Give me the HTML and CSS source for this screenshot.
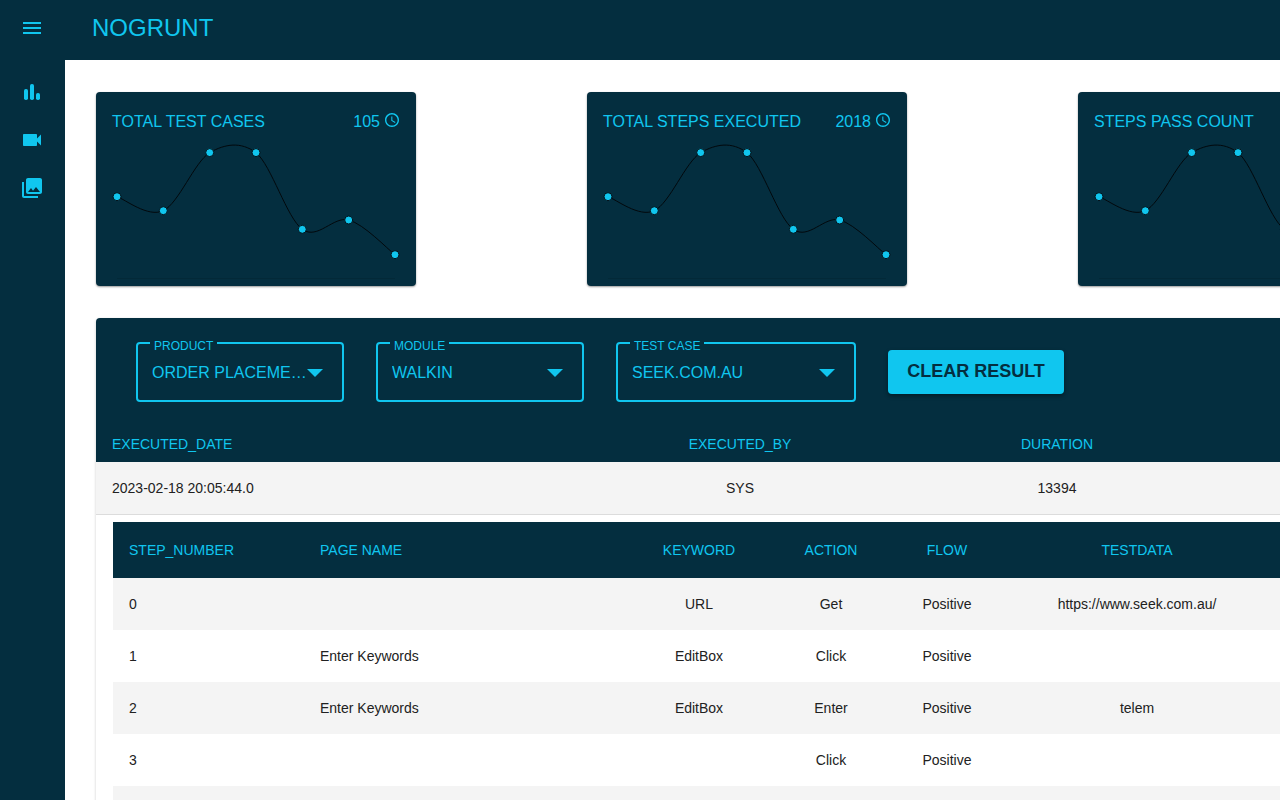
FILE: index.html
```html
<!DOCTYPE html>
<html lang="en">
<head>
<meta charset="utf-8">
<title>NOGRUNT</title>
<link rel="stylesheet" href="styles.css">
</head>
<body>
<svg class="defs" aria-hidden="true">
  <symbol id="trend" viewBox="0 0 288 150">
    <path d="M5 142.500H283" fill="none" stroke="#000" stroke-opacity=".1"/>
    <path d="M5 60.700C12.700 63 35.900 82 51.300 74.700C66.700 67.300 82.300 26.300 97.700 16.600C113.100 7.900 128.600 5.300 144 16.600C159.400 29.400 174.900 82.100 190.300 93.300C205.700 104.500 221.300 79.800 236.700 84C252.100 88.200 275.300 112.900 283 118.700" fill="none" stroke="#02080c" stroke-width="1"/>
    <g fill="#10c6ef" stroke="#02131c" stroke-width="1">
      <circle cx="5" cy="60.700" r="4"/><circle cx="51.300" cy="74.700" r="4"/><circle cx="97.700" cy="16.600" r="4"/><circle cx="144" cy="16.600" r="4"/><circle cx="190.300" cy="93.300" r="4"/><circle cx="236.700" cy="84" r="4"/><circle cx="283" cy="118.700" r="4"/>
    </g>
  </symbol>
  <symbol id="clock" viewBox="2 2 20 20">
    <path d="M11.990 2C6.470 2 2 6.480 2 12s4.470 10 9.990 10C17.520 22 22 17.520 22 12S17.520 2 11.990 2zM12 20c-4.420 0-8-3.580-8-8s3.580-8 8-8 8 3.580 8 8-3.580 8-8 8zm.5-13H11v6l5.250 3.150.75-1.230-4.500-2.670z" fill="currentColor"/>
  </symbol>
</svg>

<header class="topbar">
  <button class="icon-button" type="button" aria-label="Menu">
    <svg class="icon" viewBox="0 0 24 24"><path d="M3 18h18v-2H3v2zm0-5h18v-2H3v2zm0-7v2h18V6H3z"/></svg>
  </button>
  <h1 class="brand">NOGRUNT</h1>
</header>

<div class="shell">
  <nav class="sidebar" aria-label="Main">
    <a class="nav-link" href="#dashboard" aria-label="Dashboard">
      <svg class="icon" viewBox="0 0 24 24"><rect x="4" y="9" width="4" height="11" rx="1.800"/><rect x="10" y="4" width="4" height="16" rx="1.800"/><rect x="16" y="13" width="4" height="7" rx="1.800"/></svg>
    </a>
    <a class="nav-link" href="#recordings" aria-label="Recordings">
      <svg class="icon" viewBox="0 0 24 24"><path d="M17 10.500V7c0-.55-.45-1-1-1H4c-.55 0-1 .45-1 1v10c0 .55.45 1 1 1h12c.55 0 1-.45 1-1v-3.500l4 4v-11l-4 4z"/></svg>
    </a>
    <a class="nav-link" href="#gallery" aria-label="Screenshots">
      <svg class="icon" viewBox="0 0 24 24"><path d="M22 16V4c0-1.100-.9-2-2-2H8c-1.100 0-2 .9-2 2v12c0 1.100.9 2 2 2h12c1.100 0 2-.9 2-2zm-11-4l2.030 2.710L16 11l4 5H8l3-4zM2 6v14c0 1.100.9 2 2 2h14v-2H4V6H2z"/></svg>
    </a>
  </nav>

  <main class="content">
    <div class="board">
      <section class="cards" aria-label="Totals">
        <article class="card">
          <div class="card-head"><h2 class="card-title">TOTAL TEST CASES</h2><span class="card-value">105<svg class="clock"><use href="#clock"/></svg></span></div>
          <svg class="chart"><use href="#trend"/></svg>
        </article>
        <article class="card">
          <div class="card-head"><h2 class="card-title">TOTAL STEPS EXECUTED</h2><span class="card-value">2018<svg class="clock"><use href="#clock"/></svg></span></div>
          <svg class="chart"><use href="#trend"/></svg>
        </article>
        <article class="card">
          <div class="card-head"><h2 class="card-title">STEPS PASS COUNT</h2></div>
          <svg class="chart"><use href="#trend"/></svg>
        </article>
      </section>

      <section class="panel" aria-label="Results">
        <form class="filters">
          <div class="field">
            <label class="field-label" for="product">PRODUCT</label>
            <select class="field-select" id="product"><option>ORDER PLACEMENT</option></select>
            <svg class="arrow" viewBox="0 0 16 8"><path d="M0 0h16L8 8z"/></svg>
          </div>
          <div class="field">
            <label class="field-label" for="module">MODULE</label>
            <select class="field-select" id="module"><option>WALKIN</option></select>
            <svg class="arrow" viewBox="0 0 16 8"><path d="M0 0h16L8 8z"/></svg>
          </div>
          <div class="field field-wide">
            <label class="field-label" for="testcase">TEST CASE</label>
            <select class="field-select" id="testcase"><option>SEEK.COM.AU</option></select>
            <svg class="arrow" viewBox="0 0 16 8"><path d="M0 0h16L8 8z"/></svg>
          </div>
          <button class="clear" type="button">CLEAR RESULT</button>
        </form>

        <table class="runs">
          <colgroup><col class="run-date"><col class="run-by"><col class="run-duration"><col></colgroup>
          <thead>
            <tr><th class="start">EXECUTED_DATE</th><th>EXECUTED_BY</th><th>DURATION</th><th></th></tr>
          </thead>
          <tbody>
            <tr class="run"><td class="start">2023-02-18 20:05:44.0</td><td>SYS</td><td>13394</td><td></td></tr>
            <tr>
              <td class="detail" colspan="4">
                <table class="steps">
                  <colgroup><col class="step-number"><col class="step-page"><col class="step-keyword"><col class="step-action"><col class="step-flow"><col class="step-data"><col></colgroup>
                  <thead>
                    <tr><th class="start">STEP_NUMBER</th><th class="start">PAGE NAME</th><th>KEYWORD</th><th>ACTION</th><th>FLOW</th><th>TESTDATA</th><th></th></tr>
                  </thead>
                  <tbody>
                    <tr><td class="start">0</td><td></td><td>URL</td><td>Get</td><td>Positive</td><td>https://www.seek.com.au/</td><td></td></tr>
                    <tr><td class="start">1</td><td class="start">Enter Keywords</td><td>EditBox</td><td>Click</td><td>Positive</td><td></td><td></td></tr>
                    <tr><td class="start">2</td><td class="start">Enter Keywords</td><td>EditBox</td><td>Enter</td><td>Positive</td><td>telem</td><td></td></tr>
                    <tr><td class="start">3</td><td></td><td></td><td>Click</td><td>Positive</td><td></td><td></td></tr>
                    <tr><td></td><td></td><td></td><td></td><td></td><td></td><td></td></tr>
                  </tbody>
                </table>
              </td>
            </tr>
          </tbody>
        </table>
      </section>
    </div>
  </main>
</div>
</body>
</html>
```
FILE: styles.css
```css
:root {
  --navy: #042e3f;
  --cyan: #10c6ef;
  --stripe: #f4f4f4;
}

* { box-sizing: border-box; }

body {
  margin: 0;
  height: 100vh;
  display: flex;
  flex-direction: column;
  overflow: hidden;
  background: #fff;
  color: #212121;
  font-family: "Liberation Sans", Arial, sans-serif;
  font-size: 14px;
}

.defs {
  position: absolute;
  width: 0;
  height: 0;
}

.topbar {
  flex: none;
  display: flex;
  align-items: center;
  gap: 36px;
  padding: 4px 8px 8px;
  background: var(--navy);
  color: var(--cyan);
}

.icon-button {
  display: flex;
  padding: 12px;
  border: 0;
  background: none;
  color: inherit;
}

.icon {
  width: 24px;
  height: 24px;
  fill: currentColor;
}

.brand {
  margin: 0;
  font-size: 24px;
  font-weight: 400;
  line-height: 32px;
}

.shell {
  flex: 1;
  min-height: 0;
  display: flex;
}

.sidebar {
  flex: none;
  width: 65px;
  padding: 8px;
  background: var(--navy);
  color: var(--cyan);
}

.nav-link {
  display: flex;
  padding: 12px;
  color: inherit;
}

.content {
  flex: 1;
  min-width: 0;
  padding: 32px 0 0 31px;
  overflow: hidden;
}

.board { min-width: 1792px; }

.cards {
  display: flex;
  gap: 171px;
  margin-bottom: 32px;
}

.card {
  flex: none;
  width: 320px;
  padding: 16px 16px 0;
  border-radius: 4px;
  background: var(--navy);
  color: var(--cyan);
  box-shadow: 0 1px 2px rgba(0, 0, 0, .4);
}

.card-head {
  display: flex;
  justify-content: space-between;
  font-size: 16px;
  line-height: 28px;
}

.card-title {
  margin: 0;
  font-size: 16px;
  font-weight: 400;
}

.card-value {
  display: flex;
  gap: 5px;
}

.clock {
  width: 14px;
  height: 14px;
  margin: 5px 1px 0 0;
}

.chart {
  display: block;
  width: 100%;
  height: 150px;
}

.panel {
  border-radius: 4px;
  background: #fff;
  box-shadow: 0 1px 3px rgba(0, 0, 0, .2);
  overflow: hidden;
}

.filters {
  display: flex;
  align-items: center;
  gap: 32px;
  padding: 24px 40px;
  background: var(--navy);
}

.field {
  position: relative;
  width: 208px;
}

.field-wide { width: 240px; }

.field-label {
  position: absolute;
  top: -3px;
  left: 14px;
  padding: 0 4px;
  background: var(--navy);
  color: var(--cyan);
  font-size: 12px;
  line-height: 14px;
}

.field-select {
  display: block;
  width: 100%;
  height: 60px;
  padding: 0 34px 0 14px;
  appearance: none;
  border: 2px solid var(--cyan);
  border-radius: 4px;
  background: transparent;
  color: var(--cyan);
  font: 16px "Liberation Sans", Arial, sans-serif;
  text-overflow: ellipsis;
  white-space: nowrap;
  overflow: hidden;
}

.arrow {
  position: absolute;
  top: 27px;
  right: 21px;
  width: 16px;
  height: 8px;
  fill: var(--cyan);
  pointer-events: none;
}

.clear {
  padding: 10px 16px 12px;
  border: 0;
  border-radius: 4px;
  background: var(--cyan);
  color: var(--navy);
  font: bold 18px/22px "Liberation Sans", Arial, sans-serif;
  box-shadow: 0 2px 4px rgba(0, 0, 0, .4);
  min-width: 176px;
}

table {
  width: 100%;
  table-layout: fixed;
  border-collapse: separate;
  border-spacing: 0;
}

th,
td {
  padding: 16px;
  line-height: 20px;
  text-align: center;
}

th {
  padding: 18px 16px;
  background: var(--navy);
  color: var(--cyan);
  font-weight: 400;
}

.start { text-align: left; }

.runs > thead th { padding: 8px 16px; }

.run td {
  background: var(--stripe);
  border-bottom: 1px solid #dcdcdc;
}

.detail { padding: 7px 17px 16px; }

.steps tbody td { height: 52px; }

.steps tbody tr:nth-child(odd) { background: var(--stripe); }

.run-date { width: 504px; }
.run-by { width: 280px; }
.run-duration { width: 354px; }

.step-number { width: 191px; }
.step-page { width: 323px; }
.step-keyword { width: 144px; }
.step-action { width: 120px; }
.step-flow { width: 112px; }
.step-data { width: 268px; }
```
